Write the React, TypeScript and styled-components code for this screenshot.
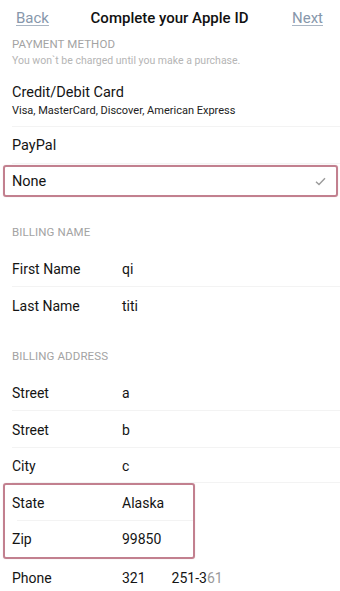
import styled, { createGlobalStyle } from "styled-components";

const GlobalStyle = createGlobalStyle`
    html, body {
        margin: 0;
        padding: 0;
        background: #fff;
    }
    body {
        font-family: Roboto, "Liberation Sans", Arial, sans-serif;
        color: #111;
        -webkit-font-smoothing: antialiased;
    }
`;

const Page = styled.div`
    width: 340px;
    height: 591px;
    overflow: hidden;
    background: #fff;
`;

const NavBar = styled.header`
    height: 35px;
    display: grid;
    grid-template-columns: 1fr auto 1fr;
    align-items: center;
    padding: 0 17px 0 16px;
`;

const NavLinkText = styled.span<{ $align: "left" | "right" }>`
    font-size: 15px;
    color: #8797ab;
    text-decoration: underline;
    text-decoration-color: #a9b5c3;
    text-underline-offset: 2px;
    justify-self: ${(p) => (p.$align === "left" ? "start" : "end")};
`;

const Title = styled.h1`
    margin: 0;
    font-size: 15px;
    font-weight: 500;
    color: #111;
`;

const SectionHead = styled.div<{ $h: number; $top: number }>`
    height: ${(p) => p.$h}px;
    padding: ${(p) => p.$top}px 12px 0;
    box-sizing: border-box;
`;

const HeadText = styled.div`
    font-size: 11.5px;
    letter-spacing: 0.1px;
    color: #a3a3a3;
    text-transform: uppercase;
    line-height: 16px;
`;

const HeadNote = styled.div`
    font-size: 10.5px;
    color: #b5b5b5;
    line-height: 14px;
    margin-top: 2px;
`;

const Row = styled.div<{ $h?: number; $pl?: number }>`
    height: ${(p) => p.$h ?? 37}px;
    display: flex;
    align-items: center;
    padding-left: ${(p) => p.$pl ?? 12}px;
    padding-right: 10px;
    box-sizing: border-box;
    position: relative;
    &::after {
        content: "";
        position: absolute;
        left: 12px;
        right: 0;
        bottom: 0;
        border-bottom: 1px solid #f3f3f3;
    }
    &:last-child::after {
        display: none;
    }
`;

const Stack = styled.div`
    display: flex;
    flex-direction: column;
    gap: 3px;
`;

const Label = styled.span`
    font-size: 14px;
    color: #141414;
    width: 110px;
    flex-shrink: 0;
`;

const Main = styled.span`
    font-size: 14.5px;
    color: #141414;
`;

const Sub = styled.span`
    font-size: 11px;
    color: #222;
`;

const Value = styled.span`
    font-size: 14px;
    color: #141414;
`;

const PhonePart = styled.span`
    margin-left: 26px;
`;

const Faded = styled.span`
    color: #9a9a9a;
`;

const Check = styled.span`
    margin-left: auto;
    display: flex;
`;

const Marked = styled.div<{ $w?: number }>`
    border: 2px solid #c2808f;
    border-radius: 3px;
    margin-left: 3px;
    width: ${(p) => (p.$w ? `${p.$w}px` : "auto")};
    margin-right: ${(p) => (p.$w ? "0" : "2px")};
    box-sizing: border-box;
    box-shadow: 0 0 1px rgba(194, 128, 143, 0.5);
`;

const Group = styled.div`
    background: #fff;
`;

export default function App() {
    return (
        <Page>
            <GlobalStyle />
            <NavBar>
                <NavLinkText $align="left">Back</NavLinkText>
                <Title>Complete your Apple ID</Title>
                <NavLinkText $align="right">Next</NavLinkText>
            </NavBar>

            <SectionHead $h={39} $top={1}>
                <HeadText>Payment Method</HeadText>
                <HeadNote>You won`t be charged until you make a purchase.</HeadNote>
            </SectionHead>

            <Group>
                <Row $h={53}>
                    <Stack>
                        <Main>Credit/Debit Card</Main>
                        <Sub>Visa, MasterCard, Discover, American Express</Sub>
                    </Stack>
                </Row>
                <Row>
                    <Main>PayPal</Main>
                </Row>
                <Marked style={{ marginTop: 1, marginBottom: 2 }}>
                    <Row $h={28} $pl={7}>
                        <Main>None</Main>
                        <Check>
                            <svg width="11" height="9" viewBox="0 0 11 9">
                                <path d="M1 4.8 L4 7.6 L10 1.2" fill="none" stroke="#9b9b9b" strokeWidth="1.4" />
                            </svg>
                        </Check>
                    </Row>
                </Marked>
            </Group>

            <SectionHead $h={51} $top={25}>
                <HeadText>Billing Name</HeadText>
            </SectionHead>

            <Group>
                <Row>
                    <Label>First Name</Label>
                    <Value>qi</Value>
                </Row>
                <Row>
                    <Label>Last Name</Label>
                    <Value>titi</Value>
                </Row>
            </Group>

            <SectionHead $h={50} $top={24}>
                <HeadText>Billing Address</HeadText>
            </SectionHead>

            <Group>
                <Row>
                    <Label>Street</Label>
                    <Value>a</Value>
                </Row>
                <Row>
                    <Label>Street</Label>
                    <Value>b</Value>
                </Row>
                <Row $h={35}>
                    <Label>City</Label>
                    <Value>c</Value>
                </Row>
                <Marked $w={192}>
                    <Row $h={36} $pl={7}>
                        <Label>State</Label>
                        <Value>Alaska</Value>
                    </Row>
                    <Row $h={36} $pl={7}>
                        <Label>Zip</Label>
                        <Value>99850</Value>
                    </Row>
                </Marked>
                <Row>
                    <Label>Phone</Label>
                    <Value>
                        321
                        <PhonePart>
                            251-3<Faded>61</Faded>
                        </PhonePart>
                    </Value>
                </Row>
            </Group>
        </Page>
    );
}
